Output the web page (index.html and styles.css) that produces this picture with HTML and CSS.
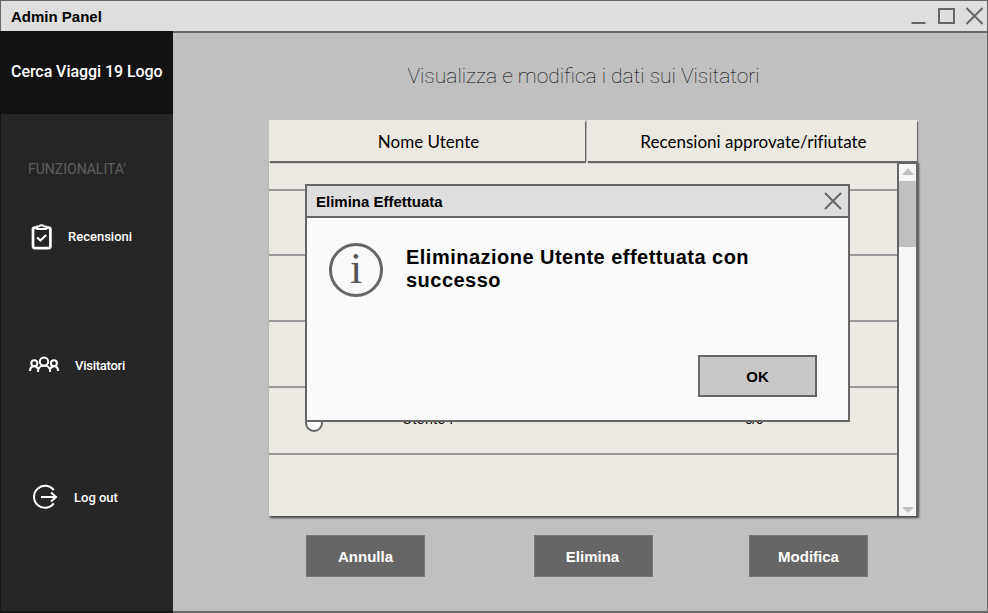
FILE: index.html
```html
<!DOCTYPE html>
<html lang="it">
<head>
<meta charset="utf-8">
<title>Admin Panel</title>
<link rel="stylesheet" href="styles.css">
</head>
<body>
<div class="window">
  <header class="titlebar">
    <span class="titlebar-text">Admin Panel</span>
    <svg class="window-controls" width="75" height="20" viewBox="0 0 75 20" fill="none" stroke="#666" stroke-width="2">
      <path d="M.5 16h14M28 2h15v14H28zM55.5 1l16 16M71.5 1l-16 16"/>
    </svg>
  </header>
  <div class="body">
    <aside class="sidebar">
      <div class="logo">Cerca Viaggi 19 Logo</div>
      <div class="section">FUNZIONALITA'</div>
      <nav class="menu">
        <a class="item reviews">
          <svg width="22" height="28" viewBox="0 0 22 28" fill="none" stroke="#fff">
            <rect x="3" y="5.7" width="17.4" height="20.4" rx="1.8" stroke-width="2.7"/>
            <path d="M6.8 7V4.5H9C9.5 2.8 13.6 2.8 14.1 4.5h2.2V7z" fill="#262626" stroke-width="1.8" stroke-linejoin="round"/>
            <path d="M7.2 15.4l3.2 3.2 5.8-5.7" stroke-width="2.1"/>
          </svg>
          <span>Recensioni</span>
        </a>
        <a class="item visitors">
          <svg width="31" height="18" viewBox="0 0 31 18" fill="none" stroke="#fff" stroke-width="2">
            <circle cx="15" cy="5.6" r="4.2"/>
            <circle cx="5.3" cy="7.3" r="3"/>
            <circle cx="24.9" cy="7.3" r="3"/>
            <path d="M9 15.9c0-3.8 2.4-6.3 6-6.3s6.2 2.5 6.2 6.3M1 15.1c0-3 1.6-4.9 4.2-4.9 2 0 3.6 1.6 4 3.4M21 13.6c.4-1.8 1.8-3.4 4-3.4 2.6 0 4.1 1.9 4.1 4.9"/>
          </svg>
          <span>Visitatori</span>
        </a>
        <a class="item logout">
          <svg width="26" height="26" viewBox="0 0 26 26" fill="none" stroke="#fff" stroke-width="2">
            <path d="M21.8 6.2A11 11 0 1 0 21.8 19.4M9 13h15M19 8.6L24 13l-5 4.4"/>
          </svg>
          <span>Log out</span>
        </a>
      </nav>
    </aside>
    <main class="content">
      <h1 class="heading">Visualizza e modifica i dati sui Visitatori</h1>
      <div class="table">
        <div class="table-head">
          <div class="th">Nome Utente</div>
          <div class="th">Recensioni approvate/rifiutate</div>
        </div>
        <div class="table-body">
          <div class="rows">
            <div class="row row-first"></div>
            <div class="row row-short"></div>
            <div class="row"></div>
            <div class="row"></div>
            <div class="row row-user">
              <span class="radio"></span>
              <span class="user">Utente4</span>
              <span class="count">0/0</span>
            </div>
            <div class="row row-last"></div>
          </div>
          <div class="scrollbar">
            <span class="arrow up"></span>
            <span class="thumb"></span>
            <span class="arrow down"></span>
          </div>
        </div>
      </div>
      <div class="actions">
        <button class="button">Annulla</button>
        <button class="button">Elimina</button>
        <button class="button">Modifica</button>
      </div>
    </main>
  </div>
  <section class="dialog">
    <header class="dialog-title">
      <span>Elimina Effettuata</span>
      <svg width="18" height="18" viewBox="0 0 18 18" fill="none" stroke="#666" stroke-width="2">
        <path d="M1 1l16 16M17 1L1 17"/>
      </svg>
    </header>
    <div class="dialog-body">
      <span class="info">i</span>
      <p class="message">Eliminazione Utente effettuata con successo</p>
    </div>
    <button class="ok">OK</button>
  </section>
</div>
</body>
</html>
```
FILE: styles.css
```css
* { box-sizing: border-box; }
body { margin: 0; font-family: "Liberation Sans", sans-serif; }
button { font-family: inherit; padding: 0; border-radius: 0; }
.window {
  position: relative;
  display: flex;
  flex-direction: column;
  width: 988px;
  height: 613px;
  background: #c0c0c0;
  overflow: hidden;
}
.titlebar {
  height: 31px;
  flex: none;
  display: flex;
  align-items: center;
  justify-content: space-between;
  padding: 0 1px 0 10px;
  border: 1px solid #666;
  border-bottom: 0;
  background: #dedede;
}
.titlebar-text { font-size: 15px; font-weight: bold; }
.window-controls { margin-top: 1px; }
.body { flex: 1; display: flex; }
.sidebar {
  width: 173px;
  background: #262626;
  border-left: 1px solid #161616;
  border-bottom: 2px solid #161616;
  color: #fff;
  font-family: Roboto, sans-serif;
}
.logo {
  height: 83px;
  margin-left: -1px;
  padding-left: 11px;
  background: #121212;
  font-size: 16px;
  font-weight: 500;
  letter-spacing: -0.06px;
  line-height: 82px;
  white-space: nowrap;
}
.section { margin: 45px 0 0 27px; font-size: 14px; line-height: 20px; color: #5e5e5e; }
.menu { display: flex; flex-direction: column; }
.item { display: flex; align-items: center; height: 30px; font-size: 13px; font-weight: 500; }
.reviews { margin: 42px 0 0 29px; gap: 16px; }
.visitors { margin: 99px 0 0 28px; gap: 15px; letter-spacing: -0.25px; }
.logout { margin: 102px 0 0 31px; gap: 16px; }
.content {
  flex: 1;
  border: solid #666;
  border-width: 2px 1px 2px 0;
  padding: 28px 69px 0 96px;
}
.heading {
  height: 30px;
  margin: 0 0 29px;
  padding-left: 138.5px;
  font: 100 21px/30px Roboto, sans-serif;
  white-space: nowrap;
}
.table { width: 649px; height: 397px; }
.table-head { display: grid; grid-template-columns: 316px 330px; gap: 2px; position: relative; }
.th {
  height: 41px;
  background: #ece9e2;
  box-shadow: 1px 2px 1px #666;
  font: 17px/43px Lato, sans-serif;
  text-align: center;
}
.th:first-child { padding-left: 3px; }
.th:last-child { padding-left: 3px; letter-spacing: 0.02px; }
.table-body { display: flex; height: 355px; background: #ece9e2; box-shadow: 1px 2px 2px #444; }
.rows { flex: 1; }
.row { height: 66px; border-bottom: 2px solid #999; }
.row-first { height: 30px; }
.row-short { height: 65px; }
.row-user { display: flex; align-items: center; height: 67px; padding-left: 36px; font-size: 14px; }
.radio { width: 18px; height: 18px; margin-top: 5px; border: 2px solid #666; border-radius: 50%; background: #fafafa; }
.user { margin: -3px 0 0 79px; width: 343px; letter-spacing: 0.4px; }
.count { margin-top: -3px; letter-spacing: -0.5px; }
.row-last { border: 0; height: 60px; }
.scrollbar {
  width: 21px;
  display: flex;
  flex-direction: column;
  align-items: center;
  padding: 4px 0 3px;
  border: 2px solid #666;
  border-top-width: 3px;
  border-bottom-width: 0;
  background: #f5f5f5;
}
.arrow { border: 6px solid transparent; }
.up { border-top: 0; border-bottom: 7px solid #c0c0c0; }
.down { border-bottom: 0; border-top: 6px solid #c0c0c0; margin-top: auto; }
.thumb { width: 17px; height: 66px; margin-top: 6px; background: #c0c0c0; }
.actions { display: flex; padding: 18px 0 0 37px; }
.button {
  width: 119px;
  height: 42px;
  border: 1px solid #777;
  background: #666;
  color: #fff;
  font-size: 15px;
  font-weight: bold;
}
.button:nth-child(2) { margin-left: 109px; padding-right: 2px; }
.button:nth-child(3) { margin-left: 96px; }
.dialog {
  position: absolute;
  left: 305px;
  top: 184px;
  width: 545px;
  height: 238px;
  display: flex;
  flex-direction: column;
  border: 2px solid #666;
  background: #fafafa;
}
.dialog-title {
  display: flex;
  align-items: center;
  justify-content: space-between;
  height: 32px;
  padding: 0 6px 0 9px;
  border-bottom: 2px solid #666;
  background: #dedede;
  font-size: 15px;
  font-weight: bold;
}
.dialog-body { display: flex; padding: 25px 60px 0 22px; gap: 23px; }
.info {
  flex: none;
  width: 54px;
  height: 54px;
  border: 3px solid #666;
  border-radius: 50%;
  font: 44px/46px "Liberation Serif", serif;
  color: #555;
  text-align: center;
}
.message { margin: 3px 0 0; font-size: 20px; line-height: 23px; font-weight: bold; letter-spacing: 0.48px; }
.ok {
  width: 119px;
  height: 42px;
  margin: auto 31px 23px auto;
  border: 2px solid #666;
  background: #c8c8c8;
  color: #000;
  font-size: 15px;
  font-weight: bold;
}
```
